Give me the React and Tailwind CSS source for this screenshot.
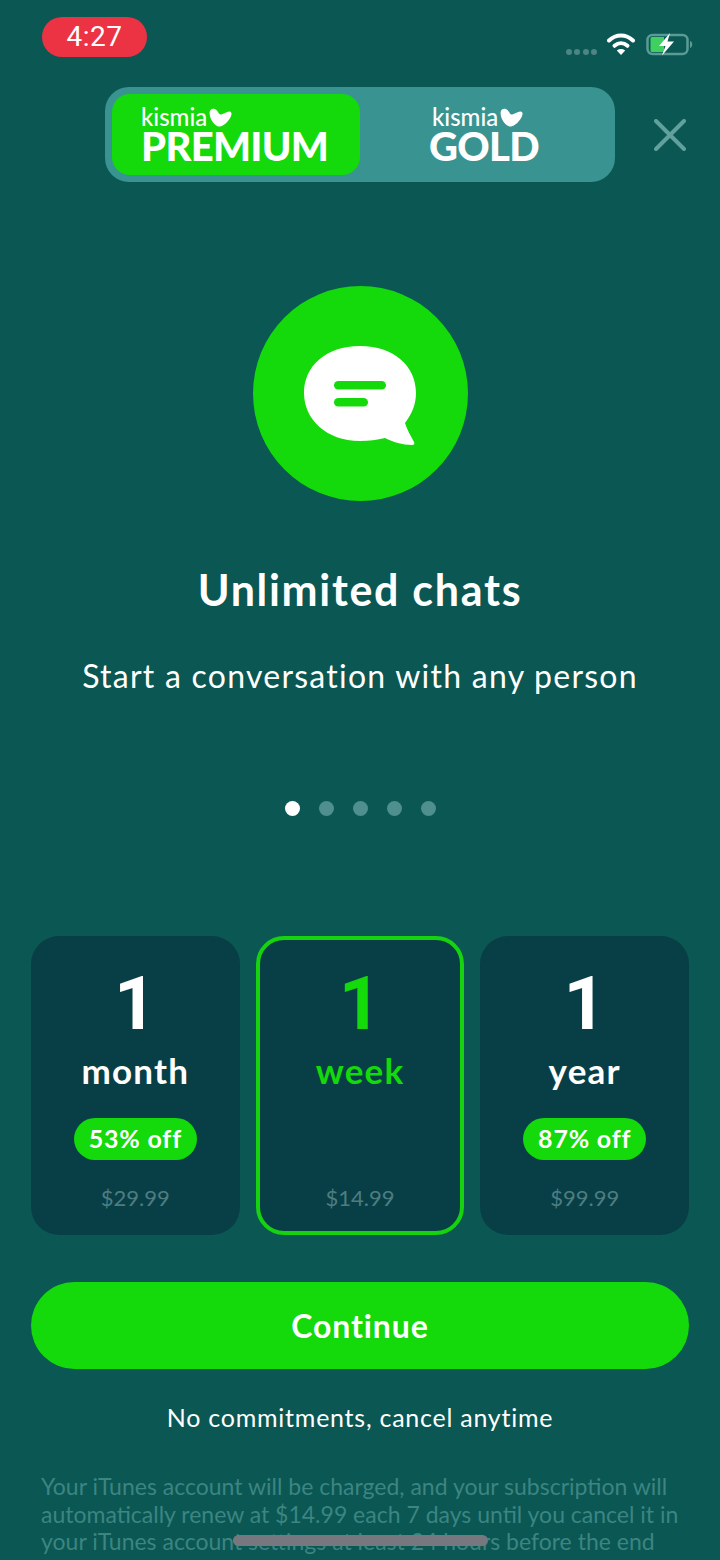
import React from "react";

function Heart({ className }) {
  return (
    <svg viewBox="0 0 24 20" className={className} fill="currentColor">
      <path d="M.5 5C.5 1.500 3.500 0 6 1c2 .8 3.200 2.600 4.200 4.600C11 6.800 12 7.200 13.500 6.600c2.500-1 5-2.600 7.500-2.900 2-.2 3 1.300 2.500 3.300C22.400 11.500 18 17 12.500 19.200 11 19.800 9.800 19.600 8.500 19 4 16.500.5 10.500.5 5z" />
    </svg>
  );
}

function Logo({ label, indent }) {
  return (
    <div className="flex flex-col items-start">
      <div className={`flex items-center gap-[2px] h-[24px] ${indent ? "ml-[3px]" : ""}`}>
        <span className="font-medium text-[24px] leading-[24px] text-white">kismia</span>
        <Heart className="w-[23px] h-[19px] text-white" />
      </div>
      <span className="font-black text-[40px] leading-[30px] tracking-[-0.7px] text-white mt-[2px]">{label}</span>
    </div>
  );
}

function Plan({ unit, off, price, active }) {
  return (
    <div className={`w-[209px] h-[299px] rounded-[28px] bg-[#083f47] flex flex-col items-center ${active ? "border-[4px] border-[#17d20f] pt-[24px]" : "pt-[28px]"}`}>
      <span className={`font-['Roboto',sans-serif] font-bold text-[74px] leading-[80px] ${active ? "text-[#14d90a]" : "text-white"}`}>1</span>
      <span className={`font-bold text-[35px] leading-[44px] tracking-[1.2px] mt-[4px] ${active ? "text-[#14d90a]" : "text-white"}`}>{unit}</span>
      <div className="h-[42px] mt-[26px]">
        {off && (
          <div className="h-[42px] w-[123px] rounded-full bg-[#14d90a] flex items-center justify-center font-bold text-[25px] tracking-[0.8px] text-white">
            {off}
          </div>
        )}
      </div>
      <span className="text-[22px] leading-[28px] mt-[24px] text-[#4d7d80]">{price}</span>
    </div>
  );
}

export default function App() {
  return (
    <div className="relative w-[720px] h-[1560px] overflow-hidden bg-[#0a5753] font-['Lato',sans-serif]">
      {/* status bar */}
      <div className="flex items-start justify-between h-[87px] pl-[42px] pr-[26px] pt-[17px]">
        <div className="w-[105px] h-[40px] rounded-full bg-[#ec3343] flex items-center justify-center text-white text-[28px] font-['Roboto',sans-serif] tracking-[0.5px]">
          4:27
        </div>
        <div className="flex items-center mt-[15px]">
          <div className="flex gap-[2.5px] mt-[15px] mr-[10px]">
            <span className="w-[6px] h-[6px] rounded-full bg-[#4d8584]" />
            <span className="w-[6px] h-[6px] rounded-full bg-[#4d8584]" />
            <span className="w-[6px] h-[6px] rounded-full bg-[#4d8584]" />
            <span className="w-[6px] h-[6px] rounded-full bg-[#4d8584]" />
          </div>
          <svg viewBox="0 0 28 22" className="w-[28px] h-[22px] mr-[11px]" fill="none" stroke="#fff" strokeWidth="4" strokeLinecap="round">
            <path d="M2 7.500C9 .8 19 .8 26 7.500" />
            <path d="M7.500 12.800c4-3.400 9-3.400 13 0" />
            <path d="M14 22l-4.200-4.600c2.600-1.800 5.800-1.800 8.400 0z" fill="#fff" stroke="none" />
          </svg>
          <svg viewBox="0 0 48 24" className="w-[48px] h-[24px]">
            <rect x="1.500" y="3" width="40" height="19" rx="5" fill="none" stroke="#5a9c95" strokeWidth="2.500" />
            <path d="M4.500 6.500a1.500 1.500 0 0 1 1.500-1.500h12v15H6a1.500 1.500 0 0 1-1.500-1.500z" fill="#3fd05f" />
            <path d="M44 9c3 .8 3 6 0 7z" fill="#5a9c95" />
            <path d="M24 1l-11 13h6.500l-3.500 9.500L28 9.500h-6.500z" fill="#fff" />
          </svg>
        </div>
      </div>

      {/* product switch */}
      <div className="relative flex justify-center">
        <div className="w-[510px] h-[95px] rounded-[24px] bg-[#399491] p-[7px] flex">
          <div className="w-[248px] h-[81px] rounded-[18px] bg-[#14d90a] pl-[29px] pt-[11px]">
            <Logo label="PREMIUM" />
          </div>
          <div className="flex-1 pl-[69px] pt-[11px]">
            <Logo label="GOLD" indent />
          </div>
        </div>
        <svg viewBox="0 0 32 32" className="absolute left-[654px] top-[32px] w-[32px] h-[32px]" fill="none" stroke="#62a09d" strokeWidth="4" strokeLinecap="round">
          <path d="M2 2l28 28M30 2L2 30" />
        </svg>
      </div>

      {/* feature */}
      <div className="flex flex-col items-center mt-[104px]">
        <div className="w-[215px] h-[215px] rounded-full bg-[#14d90a] flex items-center justify-center">
          <svg viewBox="0 0 112 100" className="w-[112px] h-[100px] mt-[5px]">
            <path d="M56 0C90 0 112 20 112 47 112 58 108 68 101 77 103 84 107 90 110 96 111 98 110 99 108 99 98 99 89 96 81 92 73 94 65 95 56 95 22 95 0 73 0 47 0 20 22 0 56 0z" fill="#fff" />
            <rect x="30" y="35" width="52" height="8.500" rx="4.250" fill="#14d90a" />
            <rect x="30" y="52" width="34" height="8.500" rx="4.250" fill="#14d90a" />
          </svg>
        </div>
        <h1 className="text-[43px] leading-[50px] font-bold tracking-[1.7px] text-white mt-[64px]">Unlimited chats</h1>
        <p className="text-[32px] leading-[40px] tracking-[1.25px] text-white mt-[41px]">Start a conversation with any person</p>
      </div>

      {/* pager */}
      <div className="flex justify-center gap-[19px] mt-[104px] h-[16px] items-center">
        <span className="w-[15px] h-[15px] rounded-full bg-white" />
        <span className="w-[15px] h-[15px] rounded-full bg-[#4f8f8d]" />
        <span className="w-[15px] h-[15px] rounded-full bg-[#4f8f8d]" />
        <span className="w-[15px] h-[15px] rounded-full bg-[#4f8f8d]" />
        <span className="w-[15px] h-[15px] rounded-full bg-[#4f8f8d]" />
      </div>

      {/* plans */}
      <div className="flex gap-[16px] px-[31px] mt-[120px]">
        <Plan unit="month" off="53% off" price="$29.99" />
        <Plan unit="week" price="$14.99" active />
        <Plan unit="year" off="87% off" price="$99.99" />
      </div>

      <div className="mx-[31px] mt-[47px] h-[87px] rounded-[44px] bg-[#14d90a] flex items-center justify-center text-white font-bold text-[32px] tracking-[0.9px]">
        Continue
      </div>

      <p className="text-center text-white text-[25px] leading-[32px] tracking-[0.75px] mt-[32px]">No commitments, cancel anytime</p>

      <p className="mx-[41px] mt-[40px] text-[23px] leading-[27.500px] text-[#3c8582]">
        Your iTunes account will be charged, and your subscription will automatically renew at $14.99 each 7 days until you cancel it in your iTunes account settings at least 24 hours before the end
      </p>

      {/* home indicator */}
      <div className="absolute left-[233px] top-[1535px] w-[255px] h-[11px] rounded-full bg-[#77777f]" />
    </div>
  );
}
